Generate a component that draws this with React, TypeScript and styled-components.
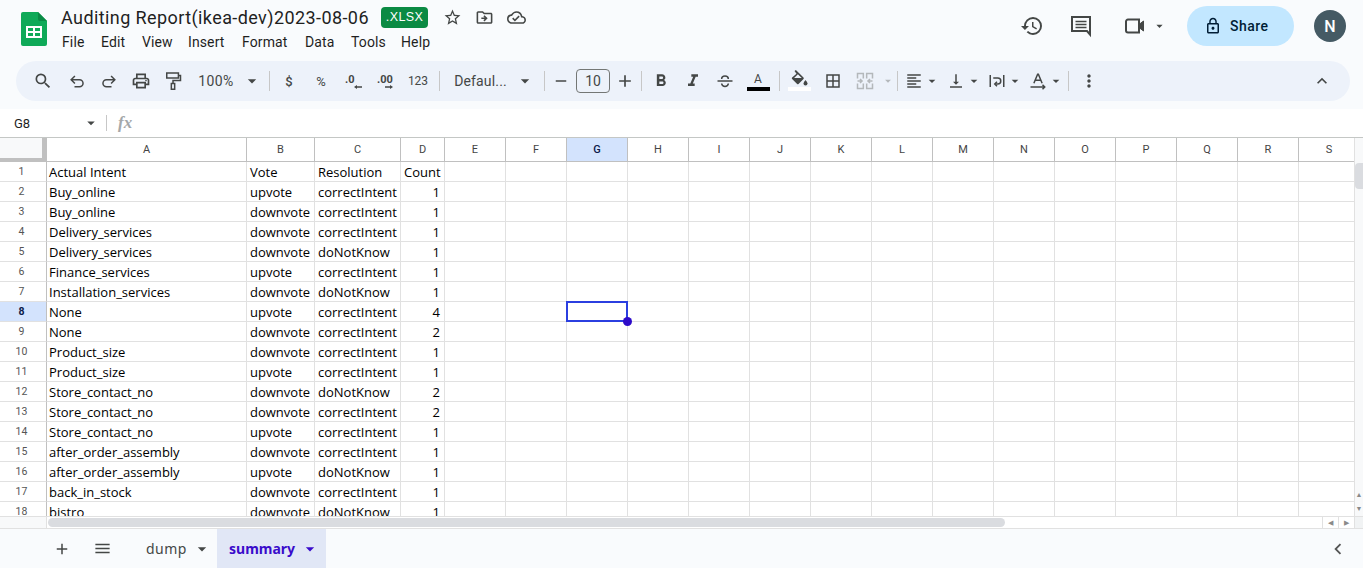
import React from "react";
import styled, { createGlobalStyle } from "styled-components";
import {
  MdSearch, MdOutlinePrint, MdArrowDropDown, MdRemove, MdAdd,
  MdFormatBold, MdFormatItalic, MdBorderAll, MdFormatAlignLeft, MdVerticalAlignBottom,
  MdMoreVert, MdExpandLess, MdOutlineStarBorder, MdOutlineDriveFileMove, MdOutlineCloudDone, MdHistory,
  MdLockOutline, MdMenu, MdChevronLeft,
} from "react-icons/md";

const Global = createGlobalStyle`
  html, body { margin: 0; padding: 0; height: 100%; overflow: hidden; background: #f9fbfd; }
  * { box-sizing: border-box; }
`;

const Page = styled.div`
  width: 1363px; height: 568px; display: flex; flex-direction: column; overflow: hidden;
  background: #f9fbfd; font-family: Roboto, "Liberation Sans", sans-serif; color: #444746;
`;
const TitleBar = styled.header`
  height: 61px; display: flex; align-items: flex-start; flex: none;
`;
const LogoWrap = styled.div`
  width: 61px; height: 61px; padding: 12px 0 0 21px; flex: none;
`;
const TitleColumn = styled.div`
  flex: 1; display: flex; flex-direction: column; padding-top: 5px;
`;
const TitleRow = styled.div`
  display: flex; align-items: center; height: 24px;
`;
const DocName = styled.div`
  font-size: 18px; color: #1f1f1f; width: 320px; white-space: nowrap; letter-spacing: 0.41px;
`;
const Badge = styled.div`
  width: 47px; height: 21px; background: #0b8a43; color: #fff; border-radius: 4px; font-size: 12.5px;
  font-weight: 500; display: flex; align-items: center; justify-content: center; letter-spacing: .4px;
  font-family: "Liberation Sans", sans-serif;
`;
const TitleIcons = styled.div`
  display: flex; margin-left: 8px; color: #444746; font-size: 19px;
`;
const TitleIcon = styled.span`
  width: 32px; display: flex; justify-content: center;
`;
const MenuRow = styled.nav`
  display: flex; margin-top: 1px; height: 24px; align-items: center; color: #1f1f1f; font-size: 14px; padding-left: 1px;
`;
const MenuItem = styled.span<{ $w: number }>`
  width: ${p => p.$w}px; letter-spacing: .12px;
`;
const Actions = styled.div`
  display: flex; align-items: center; height: 52px; color: #444746;
`;
const ActionIcon = styled.span<{ $w: number; $size?: number; $ml?: number }>`
  width: ${p => p.$w}px; display: flex; justify-content: center; align-items: center; font-size: ${p => p.$size ?? 24}px;
  margin-left: ${p => p.$ml ?? 0}px;
`;
const ShareButton = styled.div`
  width: 107px; height: 40px; border-radius: 20px; background: #c2e7ff; color: #001d35; margin-left: 20px;
  display: flex; align-items: center; padding-left: 17px; gap: 8px; font-size: 14px; font-weight: 500; letter-spacing: .5px;
`;
const Avatar = styled.div`
  width: 32px; height: 32px; border-radius: 50%; background: #455a64; color: #fff; margin: 0 17px 0 20px;
  display: flex; align-items: center; justify-content: center; font-size: 16px; font-weight: 500;
`;
const Toolbar = styled.div`
  height: 40px; margin: 0 13px 0 16px; padding-left: 11px; flex: none; border-radius: 20px; background: #edf2fa;
  display: flex; align-items: center; color: #444746; position: relative;
`;
const Tool = styled.span<{ $w?: number; $size?: number; $muted?: boolean; $ml?: number }>`
  width: ${p => p.$w ?? 32}px; height: 28px; flex: none; display: flex; align-items: center; justify-content: center;
  font-size: ${p => p.$size ?? 20}px; color: ${p => (p.$muted ? "#b4b8bb" : "#444746")};
  margin-left: ${p => p.$ml ?? 0}px;
`;
const ToolText = styled.span<{ $size?: number; $weight?: number; $spacing?: number }>`
  font-size: ${p => p.$size ?? 14}px; font-weight: ${p => p.$weight ?? 400}; white-space: nowrap; color: #444746;
  letter-spacing: ${p => p.$spacing ?? 0}px;
`;
const Sep = styled.span<{ $mx?: number }>`
  width: 1px; height: 20px; background: #c7c7c7; flex: none; margin: 0 ${p => p.$mx ?? 4}px;
`;
const SizeBox = styled.span`
  width: 34px; height: 24px; border: 1px solid #747775; border-radius: 4px; flex: none; font-size: 14px; margin-left: 5px;
  display: flex; align-items: center; justify-content: center; color: #444746;
`;
const Collapse = styled.span`
  margin-left: auto; margin-right: 18px; font-size: 20px; display: flex;
`;
const FormulaBar = styled.div`
  margin-top: 8px; height: 29px; flex: none; background: #fff; display: flex; align-items: center; font-size: 13px; color: #1f1f1f;
  border-bottom: 1px solid #c4c7c5;
`;
const NameBox = styled.div`
  width: 106px; padding-left: 14px; display: flex; align-items: center; justify-content: space-between; padding-right: 6px;
`;
const NameCaret = styled.span`
  display: flex; color: #444746; font-size: 18px;
`;
const BarDivider = styled.span`
  width: 1px; height: 16px; background: #c7c7c7;
`;
const Fx = styled.span`
  margin-left: 11px; font-family: "Liberation Serif", serif; font-style: italic; font-weight: 700; font-size: 17px; color: #a5a8aa;
`;
const SheetArea = styled.div`
  display: flex; height: 378px; flex: none; background: #fff;
`;
const GridClip = styled.div`
  width: 1354px; height: 378px; overflow: hidden; position: relative; flex: none;
`;
const Grid = styled.div`
  display: grid; grid-template-columns: 47px 200px 68px 86px 44px repeat(15, 61px);
  grid-auto-rows: 20px; grid-template-rows: 24px; width: 1359px;
`;
const ColHead = styled.div<{ $active?: boolean }>`
  border-right: 1px solid #c0c0c0; border-bottom: 1px solid #c0c0c0; display: flex; align-items: center; justify-content: center;
  font-size: 11px; font-family: Roboto, sans-serif; color: ${p => (p.$active ? "#0b1a4a" : "#444")};
  font-weight: ${p => (p.$active ? 500 : 400)}; background: ${p => (p.$active ? "#d3e3fd" : "#fff")};
`;
const Corner = styled.div`
  background: #f8f9fa; border-right: 5px solid #c0c0c0; border-bottom: 4px solid #c0c0c0;
`;
const RowHead = styled.div<{ $active?: boolean }>`
  border-right: 1px solid #c0c0c0; border-bottom: 1px solid #e1e1e1; font-size: 10.5px; color: ${p => (p.$active ? "#0b1a4a" : "#555")};
  font-weight: ${p => (p.$active ? 700 : 400)}; background: ${p => (p.$active ? "#d3e3fd" : "#fff")};
  display: flex; align-items: center; justify-content: center; padding: 0 3px 1px 0; font-family: Roboto, sans-serif;
`;
const Cell = styled.div<{ $num?: boolean; $first?: boolean }>`
  border-right: 1px solid #e1e1e1; border-bottom: 1px solid #e1e1e1; color: #000; font: 13px/19px "Open Sans", "Noto Sans", sans-serif;
  padding: 1px ${p => (p.$num ? 4 : 3)}px 0 ${p => (p.$first ? 2 : 3)}px; white-space: nowrap; overflow: hidden;
  text-align: ${p => (p.$num ? "right" : "left")};
`;
const Selection = styled.div`
  position: absolute; left: 566px; top: 163px; width: 62px; height: 21px; border: 2px solid #2b3fe0; pointer-events: none;
`;
const Handle = styled.div`
  position: absolute; right: -6px; bottom: -6px; width: 9px; height: 9px; border-radius: 50%; background: #2d0bc9;
`;
const VScroll = styled.div`
  width: 9px; background: #f8f9fa; border-left: 1px solid #e1e1e1; display: flex; flex-direction: column; padding-top: 25px;
`;
const VThumb = styled.div`
  width: 8px; height: 26px; background: #dadce0; border-radius: 4px 0 0 4px;
`;
const VArrows = styled.div`
  margin-top: auto; display: flex; flex-direction: column; align-items: center; color: #8a8a8a; font-size: 7px; line-height: 14px;
`;
const HScrollRow = styled.div`
  height: 13px; display: flex; flex: none; background: #fff; border-top: 1px solid #e1e1e1; border-bottom: 1px solid #e1e1e1;
`;
const HGutter = styled.div`
  width: 47px; background: #f8f9fa; border-right: 1px solid #e1e1e1; flex: none;
`;
const HTrack = styled.div`
  flex: 1; display: flex; padding: 1px 0 1px 1px; align-items: center;
`;
const HThumb = styled.div`
  width: 957px; height: 9px; background: #dadce0; border-radius: 5px;
`;
const HArrows = styled.div`
  margin-left: auto; display: flex; height: 11px; align-items: center; color: #8a8a8a; font-size: 7px;
`;
const HArrow = styled.span`
  width: 16px; height: 11px; display: flex; align-items: center; justify-content: center; border-left: 1px solid #e1e1e1;
`;
const HEnd = styled.div`
  width: 9px; background: #f1f3f4; border-left: 1px solid #e1e1e1; flex: none;
`;
const BottomBar = styled.div`
  flex: 1; display: flex; align-items: stretch; background: #f9fbfd; padding-left: 46px; color: #444746;
`;
const BottomIcon = styled.span<{ $w: number; $size?: number }>`
  width: ${p => p.$w}px; display: flex; align-items: center; justify-content: center; font-size: ${p => p.$size ?? 20}px; flex: none;
`;
const Tab = styled.div<{ $active?: boolean }>`
  width: ${p => (p.$active ? 109 : 83)}px; display: flex; align-items: center; padding-left: 12px; flex: none; gap: 5px;
  background: ${p => (p.$active ? "#e1e7f6" : "transparent")}; color: ${p => (p.$active ? "#3a0ccb" : "#444746")};
  font: ${p => (p.$active ? 700 : 400)} 14px "Noto Sans", Roboto, sans-serif; letter-spacing: ${p => (p.$active ? 0 : 0.45)}px;
`;
const TabCaret = styled.span`
  display: flex; font-size: 20px;
`;
const Chevron = styled.span`
  margin-left: auto; margin-right: 14px; display: flex; align-items: center; font-size: 22px; color: #555;
`;
const MutedIcon = styled.span`
  display: flex; color: #b4b8bb;
`;

const SheetsLogo = () => (
  <svg width="26" height="34" viewBox="0 0 26 34">
    <path d="M2 0h15l9 9v23a2 2 0 0 1-2 2H2a2 2 0 0 1-2-2V2a2 2 0 0 1 2-2z" fill="#0fa958" />
    <path d="M17 0l9 9h-7a2 2 0 0 1-2-2z" fill="#0a8a45" />
    <path d="M5 14h16v12H5z M7 16v3h5v-3z M14 16v3h5v-3z M7 21v3h5v-3z M14 21v3h5v-3z" fill="#fff" fillRule="evenodd" />
  </svg>
);
const Comment = () => (
  <svg width="24" height="24" viewBox="0 0 24 24" fill="none" stroke="currentColor" strokeWidth="2">
    <path d="M3 3h18v17.5L18 17H3z" /><path d="M6.500 7.500h11M6.500 10.500h11M6.500 13.500h11" strokeWidth="1.6" />
  </svg>
);
const Video = () => (
  <svg width="24" height="24" viewBox="0 0 24 24" fill="none" stroke="currentColor" strokeWidth="2">
    <path d="M5 5.500h11v13H5a2 2 0 0 1-2-2v-9a2 2 0 0 1 2-2z" /><path d="M16 10.500l4.500-3.500v10L16 13.500z" fill="currentColor" strokeWidth="1" />
  </svg>
);
const Undo = () => (
  <svg width="20" height="20" viewBox="0 0 24 24" fill="none" stroke="currentColor" strokeWidth="1.8">
    <path d="M9.500 6L5 10.500 9.500 15M5 10.500h10a4.250 4.250 0 0 1 0 8.500H9" />
  </svg>
);
const Redo = () => (
  <svg width="20" height="20" viewBox="0 0 24 24" fill="none" stroke="currentColor" strokeWidth="1.8">
    <path d="M14.500 6L19 10.500 14.500 15M19 10.500H9a4.250 4.250 0 0 0 0 8.500h6" />
  </svg>
);
const PaintRoller = () => (
  <svg width="20" height="20" viewBox="0 0 24 24" fill="none" stroke="currentColor" strokeWidth="1.8">
    <path d="M4.500 2.500h14v6h-14zM18.500 5.500H21v6h-9v3.500" /><path d="M10 15h4v7h-4z" />
  </svg>
);
const Strike = () => (
  <svg width="20" height="20" viewBox="0 0 24 24" fill="none" stroke="currentColor" strokeWidth="1.8">
    <path d="M3 12h18" /><path d="M8 9.500C8 7 10 6 12 6s4 1 4 3.500M8 15c0 2 2 3.500 4 3.500s4-1.500 4-3.500" />
  </svg>
);
const Decimal = ({ more }: { more?: boolean }) => (
  <svg width="28" height="22" viewBox="0 0 28 22" fill="currentColor" fontFamily="Roboto, sans-serif" fontWeight="700" fontSize="11">
    <text x="6" y="13">{more ? ".00" : ".0"}</text>
    {more
      ? <path d="M14 16.300h5V15l3 2-3 2v-1.300h-5z" />
      : <path d="M23 16.300h-5V15l-3 2 3 2v-1.300h5z" />}
  </svg>
);
const TextColor = () => (
  <svg width="24" height="24" viewBox="0 0 24 24">
    <text x="12" y="14" textAnchor="middle" fontFamily="Roboto, sans-serif" fontSize="12" fill="#444746">A</text>
    <rect x="1" y="18" width="23" height="4" fill="#000" />
  </svg>
);
const FillColor = () => (
  <svg width="24" height="26" viewBox="0 0 24 26">
    <g transform="translate(-1.500 2)">
      <path d="M9 1l1.400-1L18 7.500a1 1 0 0 1 0 1.400l-5 5a1 1 0 0 1-1.400 0l-5-5a1 1 0 0 1 0-1.400L11 3.800z M8.600 8h7.600L12.400 4.300z" fill="#444746" fillRule="evenodd" />
      <path d="M20 10s2 2.400 2 3.600a2 2 0 0 1-4 0C18 12.400 20 10 20 10z" fill="#444746" />
    </g>
    <rect x="1" y="19" width="23" height="4" fill="#fff" />
  </svg>
);
const Merge = () => (
  <svg width="20" height="20" viewBox="0 0 24 24" fill="none" stroke="currentColor" strokeWidth="1.800">
    <path d="M3 9V3h7v6M14 9V3h7v6M3 15v6h7v-6M14 15v6h7v-6" /><path d="M3 12h5m-2-2.500 2.500 2.500L6 14.500M21 12h-5m2-2.500L15.500 12l2.500 2.500" />
  </svg>
);
const Wrap = () => (
  <svg width="18" height="18" viewBox="0 0 24 24" fill="none" stroke="currentColor" strokeWidth="2">
    <path d="M3 4v16M21 4v16" /><path d="M7 8h6a4 4 0 0 1 0 8h-3" /><path d="M12 13l-3 3 3 3" />
  </svg>
);
const Rotate = () => (
  <svg width="18" height="18" viewBox="0 0 24 24" fill="none" stroke="currentColor" strokeWidth="2">
    <path d="M6.500 15L11.500 3h1l5 12M8 11h8" /><path d="M2 20h19m-3-3l3 3-3 3" />
  </svg>
);

const columns = "ABCDEFGHIJKLMNOPQRS".split("");
const rows: [string, string, string, number][] = [
  ["Buy_online", "upvote", "correctIntent", 1],
  ["Buy_online", "downvote", "correctIntent", 1],
  ["Delivery_services", "downvote", "correctIntent", 1],
  ["Delivery_services", "downvote", "doNotKnow", 1],
  ["Finance_services", "upvote", "correctIntent", 1],
  ["Installation_services", "downvote", "doNotKnow", 1],
  ["None", "upvote", "correctIntent", 4],
  ["None", "downvote", "correctIntent", 2],
  ["Product_size", "downvote", "correctIntent", 1],
  ["Product_size", "upvote", "correctIntent", 1],
  ["Store_contact_no", "downvote", "doNotKnow", 2],
  ["Store_contact_no", "downvote", "correctIntent", 2],
  ["Store_contact_no", "upvote", "correctIntent", 1],
  ["after_order_assembly", "downvote", "correctIntent", 1],
  ["after_order_assembly", "upvote", "doNotKnow", 1],
  ["back_in_stock", "downvote", "correctIntent", 1],
  ["bistro", "downvote", "doNotKnow", 1],
];
const blanks = Array.from({ length: 15 });
const menus: [string, number][] = [["File", 39], ["Edit", 41], ["View", 46], ["Insert", 54], ["Format", 63], ["Data", 46], ["Tools", 50], ["Help", 40]];

export default function App() {
  return (
    <Page>
      <Global />
      <TitleBar>
        <LogoWrap><SheetsLogo /></LogoWrap>
        <TitleColumn>
          <TitleRow>
            <DocName>Auditing Report(ikea-dev)2023-08-06</DocName>
            <Badge>.XLSX</Badge>
            <TitleIcons>
              <TitleIcon><MdOutlineStarBorder /></TitleIcon>
              <TitleIcon><MdOutlineDriveFileMove /></TitleIcon>
              <TitleIcon><MdOutlineCloudDone /></TitleIcon>
            </TitleIcons>
          </TitleRow>
          <MenuRow>
            {menus.map(([m, w]) => <MenuItem key={m} $w={w}>{m}</MenuItem>)}
          </MenuRow>
        </TitleColumn>
        <Actions>
          <ActionIcon $w={32}><MdHistory /></ActionIcon>
          <ActionIcon $w={66}><Comment /></ActionIcon>
          <ActionIcon $w={42}><Video /></ActionIcon>
          <ActionIcon $w={15} $size={20} $ml={-4}><MdArrowDropDown /></ActionIcon>
          <ShareButton><MdLockOutline size={18} /><span>Share</span></ShareButton>
          <Avatar>N</Avatar>
        </Actions>
      </TitleBar>

      <Toolbar>
        <Tool><MdSearch /></Tool>
        <Tool $ml={2}><Undo /></Tool>
        <Tool><Redo /></Tool>
        <Tool><MdOutlinePrint /></Tool>
        <Tool><PaintRoller /></Tool>
        <Tool $w={46} $ml={4}><ToolText $spacing={0.4}>100%</ToolText></Tool>
        <Tool $w={26}><MdArrowDropDown /></Tool>
        <Sep />
        <Tool $ml={-1}><ToolText $size={13} $weight={500}>$</ToolText></Tool>
        <Tool><ToolText $size={13}>%</ToolText></Tool>
        <Tool><Decimal /></Tool>
        <Tool><Decimal more /></Tool>
        <Tool $w={34}><ToolText $size={12}>123</ToolText></Tool>
        <Sep />
        <Tool $w={73}><ToolText $spacing={0.15}>Defaul...</ToolText></Tool>
        <Tool $w={26} $ml={-5}><MdArrowDropDown /></Tool>
        <Sep $mx={6} />
        <Tool $w={20} $size={18}><MdRemove /></Tool>
        <SizeBox>10</SizeBox>
        <Tool $w={32} $ml={-1}><MdAdd /></Tool>
        <Sep $mx={0} />
        <Tool $ml={3}><MdFormatBold /></Tool>
        <Tool><MdFormatItalic /></Tool>
        <Tool><Strike /></Tool>
        <Tool $w={34}><TextColor /></Tool>
        <Sep $mx={4} />
        <Tool $w={30}><FillColor /></Tool>
        <Tool $ml={3} $size={18}><MdBorderAll /></Tool>
        <Tool><MutedIcon><Merge /></MutedIcon></Tool>
        <Tool $w={14} $muted><MdArrowDropDown /></Tool>
        <Sep $mx={2} />
        <Tool $w={28} $size={18}><MdFormatAlignLeft /></Tool>
        <Tool $w={16} $ml={-4}><MdArrowDropDown /></Tool>
        <Tool $w={32} $size={18}><MdVerticalAlignBottom /></Tool>
        <Tool $w={16} $ml={-6}><MdArrowDropDown /></Tool>
        <Tool $w={30}><Wrap /></Tool>
        <Tool $w={16} $ml={-5}><MdArrowDropDown /></Tool>
        <Tool $w={30}><Rotate /></Tool>
        <Tool $w={16} $ml={-5}><MdArrowDropDown /></Tool>
        <Sep $mx={4} />
        <Tool><MdMoreVert /></Tool>
        <Collapse><MdExpandLess /></Collapse>
      </Toolbar>

      <FormulaBar>
        <NameBox>
          <span>G8</span>
          <NameCaret><MdArrowDropDown /></NameCaret>
        </NameBox>
        <BarDivider />
        <Fx>fx</Fx>
      </FormulaBar>

      <SheetArea>
        <GridClip>
          <Grid>
            <Corner />
            {columns.map(c => <ColHead key={c} $active={c === "G"}>{c}</ColHead>)}
            <RowHead>1</RowHead>
            <Cell $first>Actual Intent</Cell><Cell>Vote</Cell><Cell>Resolution</Cell><Cell>Count</Cell>
            {blanks.map((_, i) => <Cell key={i} />)}
            {rows.map((r, i) => (
              <React.Fragment key={i}>
                <RowHead $active={i === 6}>{i + 2}</RowHead>
                <Cell $first>{r[0]}</Cell><Cell>{r[1]}</Cell><Cell>{r[2]}</Cell><Cell $num>{r[3]}</Cell>
                {blanks.map((_, j) => <Cell key={j} />)}
              </React.Fragment>
            ))}
          </Grid>
          <Selection><Handle /></Selection>
        </GridClip>
        <VScroll>
          <VThumb />
          <VArrows><span>▲</span><span>▼</span></VArrows>
        </VScroll>
      </SheetArea>
      <HScrollRow>
        <HGutter />
        <HTrack>
          <HThumb />
          <HArrows><HArrow>◀</HArrow><HArrow>▶</HArrow></HArrows>
        </HTrack>
        <HEnd />
      </HScrollRow>

      <BottomBar>
        <BottomIcon $w={32} $size={18}><MdAdd /></BottomIcon>
        <BottomIcon $w={48} $size={19}><MdMenu /></BottomIcon>
        <BottomIcon $w={8} />
        <Tab>dump<TabCaret><MdArrowDropDown /></TabCaret></Tab>
        <Tab $active>summary<TabCaret><MdArrowDropDown /></TabCaret></Tab>
        <Chevron><MdChevronLeft /></Chevron>
      </BottomBar>
    </Page>
  );
}
